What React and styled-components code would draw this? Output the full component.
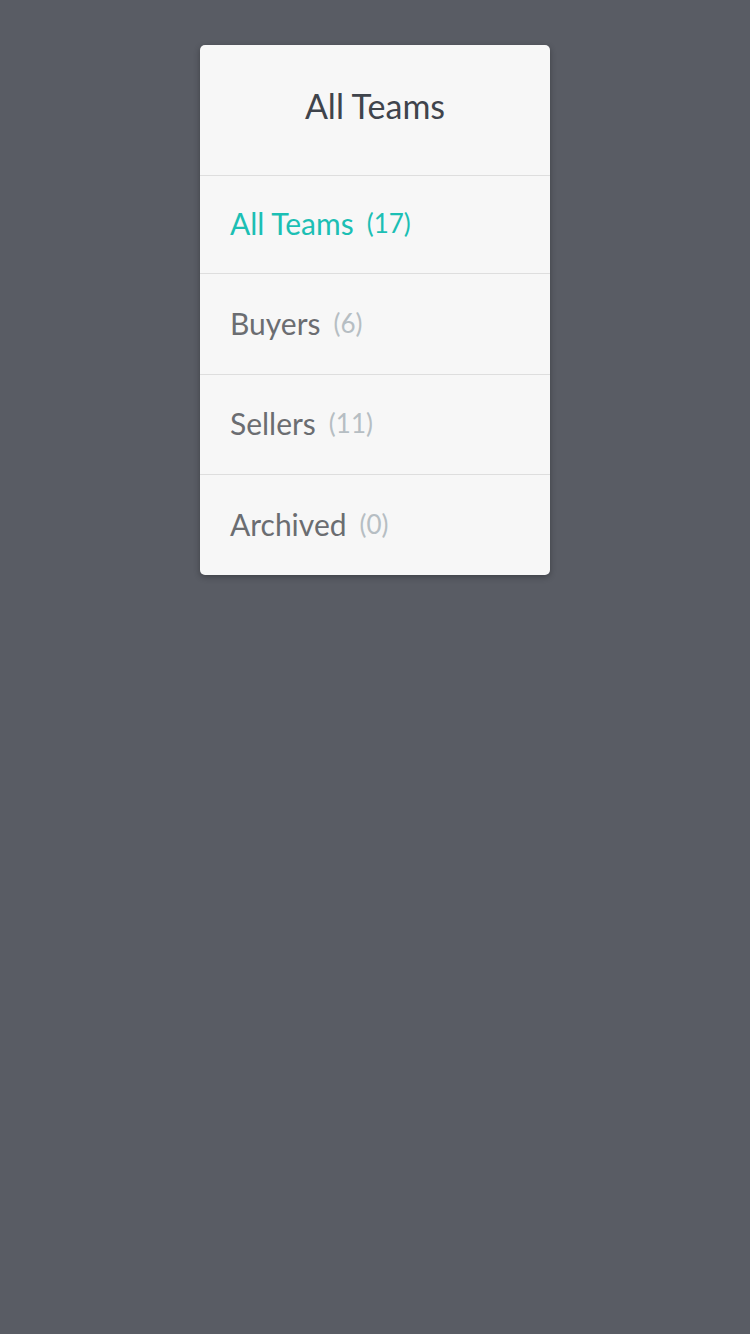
import React from "react";
import styled, { createGlobalStyle } from "styled-components";

const Global = createGlobalStyle`
  html, body { margin: 0; padding: 0; background: #595c64; }
  body { font-family: Lato, "Open Sans", sans-serif; -webkit-font-smoothing: antialiased; }
`;

const Screen = styled.div`
  min-height: 1334px;
  display: flex;
  justify-content: center;
  align-items: flex-start;
  padding-top: 45px;
  box-sizing: border-box;
`;

const Card = styled.div`
  width: 350px;
  background: #f7f7f7;
  border-radius: 5px;
  box-shadow: 0 2px 6px rgba(0, 0, 0, 0.3);
  overflow: hidden;
`;

const Header = styled.div`
  height: 131px;
  display: flex;
  align-items: center;
  justify-content: center;
  font-size: 34px;
  color: #3f444c;
  border-bottom: 1px solid #dedede;
  padding-bottom: 10px;
  box-sizing: border-box;
`;

const Row = styled.div`
  height: ${(p) => p.$h}px;
  display: flex;
  align-items: center;
  padding-left: 30px;
  padding-bottom: 3px;
  box-sizing: border-box;
  border-bottom: ${(p) => (p.$last ? "none" : "1px solid #dedede")};
  color: ${(p) => (p.$active ? "#1cbfb4" : "#6b6d71")};
  font-size: 30px;
`;

const Count = styled.span`
  margin-left: 13px;
  font-size: 26px;
  color: ${(p) => (p.$active ? "#1cbfb4" : "#b6bec3")};
`;

const items = [
  { label: "All Teams", count: 17, active: true, h: 98 },
  { label: "Buyers", count: 6, h: 101 },
  { label: "Sellers", count: 11, h: 100 },
  { label: "Archived", count: 0, h: 100, last: true },
];

export default function App() {
  return (
    <>
      <Global />
      <Screen>
        <Card>
          <Header>All Teams</Header>
          {items.map((it) => (
            <Row key={it.label} $active={it.active} $h={it.h} $last={it.last}>
              {it.label}
              <Count $active={it.active}>({it.count})</Count>
            </Row>
          ))}
        </Card>
      </Screen>
    </>
  );
}
